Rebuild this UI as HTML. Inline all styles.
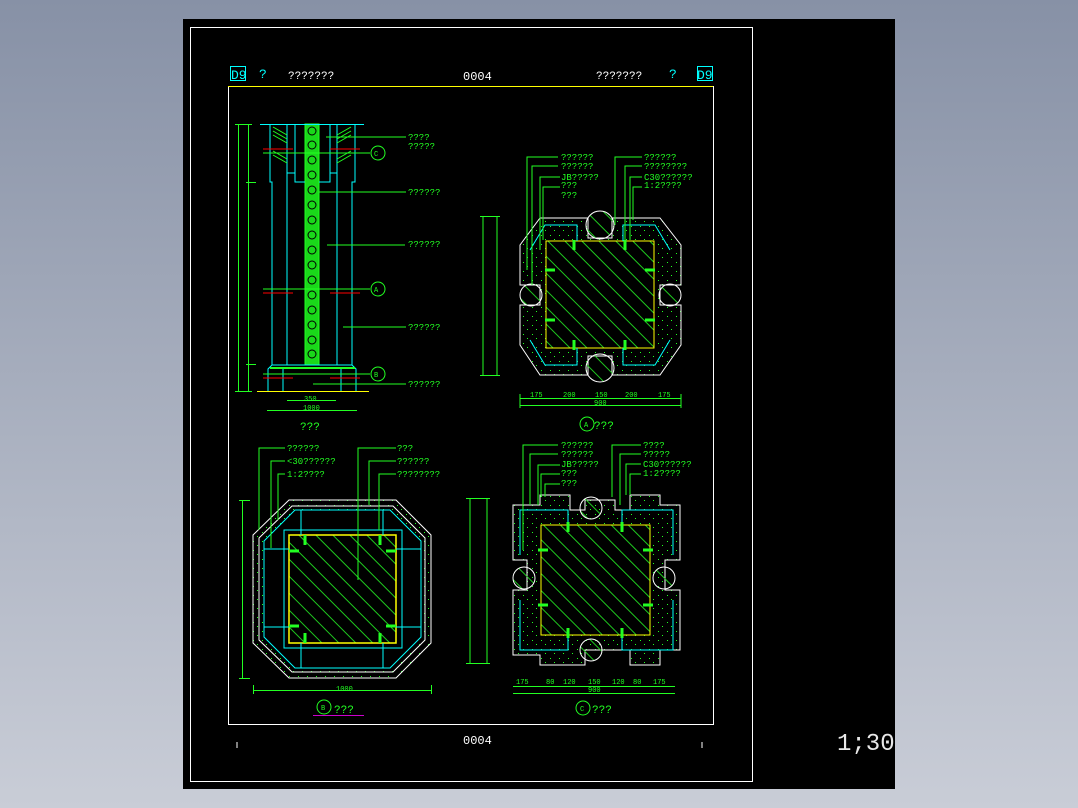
<!DOCTYPE html>
<html><head><meta charset="utf-8"><style>
html,body{margin:0;padding:0;width:1078px;height:808px;overflow:hidden;background:linear-gradient(#8791a6,#c9cdd7);}
svg{position:absolute;left:0;top:0}
text{font-family:"Liberation Mono",monospace;}
</style></head><body>
<svg width="1078" height="808" viewBox="0 0 1078 808">
<defs>
<pattern id="h" width="12" height="12" patternUnits="userSpaceOnUse" patternTransform="rotate(-45)">
<line x1="1" y1="0" x2="1" y2="12" stroke="#1fc91f" stroke-width="1"/>
</pattern>
<pattern id="dots" width="9" height="9" patternUnits="userSpaceOnUse">
<rect x="1" y="1" width="1" height="1" fill="#2f2"/><rect x="5" y="5" width="1" height="1" fill="#2f2"/>
</pattern>
</defs>
<rect x="183" y="19" width="712" height="770" fill="#000"/>
<rect x="190.5" y="27.5" width="562" height="754" fill="none" stroke="#fff"/>
<rect x="228.5" y="86.5" width="485" height="638" fill="none" stroke="#fff"/>
<line x1="228" y1="86.5" x2="713" y2="86.5" stroke="#ff0"/>
<g fill="#fff" font-size="11">
<text x="288" y="79">???????</text><text x="463" y="80" font-size="12">0004</text><text x="596" y="79">???????</text>
<text x="463" y="744" font-size="12">0004</text>
</g>
<g fill="#0ff" font-size="13"><text x="231" y="79">D9</text><text x="259" y="78">?</text><text x="669" y="78">?</text><text x="697" y="79">D9</text></g>
<rect x="230.5" y="66.5" width="15" height="14" fill="none" stroke="#0ff"/>
<rect x="697.5" y="66.5" width="15" height="14" fill="none" stroke="#0ff"/>
<line x1="237" y1="742" x2="237" y2="748" stroke="#fff"/><line x1="702" y1="742" x2="702" y2="748" stroke="#fff"/>
<text x="837" y="750" fill="#e8e8e8" font-size="24" font-family="Liberation Sans,sans-serif">1;30</text>

<!-- Elevation -->
<g fill="none" stroke-width="1">
<rect x="305" y="124" width="14" height="241" fill="#1ad81a" stroke="#2f2"/>
<g stroke="#000">
<circle cx="312" cy="131" r="4"/><circle cx="312" cy="145" r="4"/><circle cx="312" cy="160" r="4"/><circle cx="312" cy="175" r="4"/><circle cx="312" cy="190" r="4"/><circle cx="312" cy="205" r="4"/><circle cx="312" cy="220" r="4"/><circle cx="312" cy="235" r="4"/><circle cx="312" cy="250" r="4"/><circle cx="312" cy="265" r="4"/><circle cx="312" cy="280" r="4"/><circle cx="312" cy="295" r="4"/><circle cx="312" cy="310" r="4"/><circle cx="312" cy="325" r="4"/><circle cx="312" cy="340" r="4"/><circle cx="312" cy="354" r="4"/></g>
<g stroke="#0ff">
<line x1="260" y1="124.5" x2="364" y2="124.5"/>
<polyline points="270,124 270,182 272,182 272,365"/><polyline points="355,124 355,182 352,182 352,365"/>
<polyline points="287,124 287,173 295,173 295,124"/><polyline points="337,124 337,173 330,173 330,124"/>
<polyline points="295,124 295,182 305,182"/><polyline points="330,124 330,182 319,182"/>
<line x1="287" y1="173" x2="287" y2="365"/><line x1="337" y1="173" x2="337" y2="365"/>
<polyline points="272,365 268,369 268,391"/><polyline points="352,365 356,369 356,391"/>
<line x1="272" y1="365" x2="352" y2="365"/><line x1="283" y1="369" x2="283" y2="391"/><line x1="341" y1="369" x2="341" y2="391"/>
</g>
<g stroke="#2f2"><path d="M273,127 L287,135 M273,131 L287,139 M273,135 L287,143 M337,135 L351,127 M337,139 L351,131 M337,143 L351,135 M273,151 L287,159 M273,155 L287,163 M337,159 L351,151 M337,163 L351,155"/></g>
<line x1="270" y1="368" x2="355" y2="368" stroke="#2f2" stroke-width="2"/>
<line x1="257" y1="391.5" x2="369" y2="391.5" stroke="#ff0"/>
<g stroke="#f00"><line x1="263" y1="149" x2="293" y2="149"/><line x1="330" y1="149" x2="360" y2="149"/><line x1="263" y1="293" x2="293" y2="293"/><line x1="330" y1="293" x2="360" y2="293"/><line x1="263" y1="378" x2="293" y2="378"/><line x1="330" y1="378" x2="360" y2="378"/></g>
<g stroke="#2f2">
<line x1="263" y1="153" x2="370" y2="153"/><line x1="263" y1="289" x2="370" y2="289"/><line x1="263" y1="374" x2="370" y2="374"/>
<line x1="238.5" y1="124" x2="238.5" y2="391"/><line x1="248.5" y1="124" x2="248.5" y2="391"/>
<line x1="235" y1="124.5" x2="252" y2="124.5"/><line x1="235" y1="391.5" x2="252" y2="391.5"/><line x1="246" y1="182.5" x2="256" y2="182.5"/><line x1="246" y1="364.5" x2="256" y2="364.5"/>
<line x1="287" y1="400.5" x2="336" y2="400.5"/><line x1="267" y1="410.5" x2="357" y2="410.5"/>
<line x1="326" y1="137" x2="406" y2="137"/><line x1="319" y1="192" x2="406" y2="192"/><line x1="327" y1="245" x2="405" y2="245"/><line x1="343" y1="327" x2="406" y2="327"/><line x1="313" y1="384" x2="406" y2="384"/>
<circle cx="378" cy="153" r="7"/><circle cx="378" cy="289" r="7"/><circle cx="378" cy="374" r="7"/>
</g>
</g>
<g fill="#2f2" font-size="9">
<text x="408" y="140">????</text><text x="408" y="149">?????</text><text x="408" y="195">??????</text><text x="408" y="247">??????</text><text x="408" y="330">??????</text><text x="408" y="387">??????</text>
<text x="300" y="430" font-size="11">???</text><text x="374" y="156" font-size="7">C</text><text x="374" y="292" font-size="7">A</text><text x="374" y="377" font-size="7">B</text>
<text x="304" y="401" font-size="7">350</text><text x="303" y="410" font-size="7">1000</text>
</g>

<!-- Plan A -->
<g fill="none">
<path d="M520,245 L540,218 L588,218 L588,238 L612,238 L612,218 L660,218 L681,245 L681,285 L660,285 L660,305 L681,305 L681,345 L660,375 L612,375 L612,356 L588,356 L588,375 L540,375 L520,345 L520,305 L540,305 L540,285 L520,285 Z" stroke="#fff" fill="url(#dots)"/>
<circle cx="600" cy="225" r="14" fill="url(#h)" stroke="#fff"/><circle cx="600" cy="368" r="14" fill="url(#h)" stroke="#fff"/>
<circle cx="531" cy="295" r="11" fill="url(#h)" stroke="#fff"/><circle cx="670" cy="295" r="11" fill="url(#h)" stroke="#fff"/>
<rect x="546" y="241" width="108" height="107" fill="#000" stroke="#ff0"/>
<rect x="546" y="241" width="108" height="107" fill="url(#h)" stroke="#ff0"/>
<g stroke="#0ff"><path d="M530,250 L545,225 L577,225 L577,241"/><path d="M670,250 L655,225 L623,225 L623,241"/><path d="M530,340 L545,365 L577,365 L577,348"/><path d="M670,340 L655,365 L623,365 L623,348"/></g>
<g stroke="#2f2" stroke-width="3"><line x1="574" y1="240" x2="574" y2="250"/><line x1="625" y1="240" x2="625" y2="250"/><line x1="574" y1="340" x2="574" y2="350"/><line x1="625" y1="340" x2="625" y2="350"/><line x1="545" y1="270" x2="555" y2="270"/><line x1="645" y1="270" x2="655" y2="270"/><line x1="545" y1="320" x2="555" y2="320"/><line x1="645" y1="320" x2="655" y2="320"/></g>
<g stroke="#2f2"><polyline points="527,270 527,157 558,157"/><polyline points="532,285 532,166 558,166"/><polyline points="540,250 540,177 560,177"/><polyline points="543,240 543,187 560,187"/>
<polyline points="615,225 615,157 642,157"/><polyline points="625,240 625,166 642,166"/><polyline points="630,240 630,177 642,177"/><polyline points="633,220 633,187 642,187"/>
<line x1="483" y1="216" x2="483" y2="375"/><line x1="497" y1="216" x2="497" y2="375"/><line x1="480" y1="216.5" x2="500" y2="216.5"/><line x1="480" y1="375.5" x2="500" y2="375.5"/>
<line x1="520" y1="398.5" x2="681" y2="398.5"/><line x1="520" y1="405.5" x2="681" y2="405.5"/><line x1="520" y1="394" x2="520" y2="408"/><line x1="681" y1="394" x2="681" y2="408"/>
<circle cx="587" cy="424" r="7"/></g>
</g>
<g fill="#2f2" font-size="9">
<text x="561" y="160">??????</text><text x="561" y="169">??????</text><text x="561" y="180">JB?????</text><text x="561" y="188">???</text><text x="561" y="198">???</text>
<text x="644" y="160">??????</text><text x="644" y="169">????????</text><text x="644" y="180">C30??????</text><text x="644" y="188">1:2????</text>
<text x="594" y="429" font-size="11">???</text><text x="584" y="427" font-size="7">A</text>
<g font-size="7"><text x="530" y="397">175</text><text x="563" y="397">200</text><text x="595" y="397">150</text><text x="625" y="397">200</text><text x="658" y="397">175</text><text x="594" y="405">900</text></g>
</g>

<!-- Plan B -->
<g fill="none">
<path d="M253,535 L289,500 L396,500 L431,535 L431,643 L396,678 L289,678 L253,643 Z" stroke="#fff" fill="url(#dots)"/>
<path d="M259,538 L292,506 L393,506 L425,538 L425,640 L393,672 L292,672 L259,640 Z" stroke="#fff"/>
<path d="M264,541 L295,510 L390,510 L421,541 L421,637 L390,668 L295,668 L264,637 Z" stroke="#0ff" fill="#000"/>
<rect x="284" y="530" width="118" height="118" stroke="#0ff"/>
<rect x="289" y="535" width="107" height="108" fill="url(#h)" stroke="#ff0" stroke-width="1.5"/>
<g stroke="#0ff"><line x1="301" y1="510" x2="301" y2="535"/><line x1="383" y1="510" x2="383" y2="535"/><line x1="301" y1="643" x2="301" y2="668"/><line x1="383" y1="643" x2="383" y2="668"/><line x1="264" y1="549" x2="289" y2="549"/><line x1="264" y1="627" x2="289" y2="627"/><line x1="396" y1="549" x2="421" y2="549"/><line x1="396" y1="627" x2="421" y2="627"/></g>
<g stroke="#2f2" stroke-width="3"><line x1="305" y1="535" x2="305" y2="545"/><line x1="380" y1="535" x2="380" y2="545"/><line x1="305" y1="633" x2="305" y2="643"/><line x1="380" y1="633" x2="380" y2="643"/><line x1="289" y1="551" x2="299" y2="551"/><line x1="386" y1="551" x2="396" y2="551"/><line x1="289" y1="626" x2="299" y2="626"/><line x1="386" y1="626" x2="396" y2="626"/></g>
<g stroke="#2f2"><polyline points="259,530 259,448 285,448"/><polyline points="271,548 271,461 285,461"/><polyline points="278,520 278,474 285,474"/>
<polyline points="358,580 358,448 396,448"/><polyline points="369,505 369,461 396,461"/><polyline points="379,530 379,474 396,474"/>
<line x1="242.5" y1="500" x2="242.5" y2="678"/><line x1="239" y1="500.5" x2="250" y2="500.5"/><line x1="239" y1="678.5" x2="250" y2="678.5"/>
<line x1="253" y1="690.5" x2="431" y2="690.5"/><line x1="253.5" y1="685" x2="253.5" y2="694"/><line x1="431.5" y1="685" x2="431.5" y2="694"/>
<circle cx="324" cy="707" r="7"/></g>
<line x1="313" y1="715.5" x2="364" y2="715.5" stroke="#c0c"/>
</g>
<g fill="#2f2" font-size="9">
<text x="287" y="451">??????</text><text x="287" y="464">&lt;30??????</text><text x="287" y="477">1:2????</text>
<text x="397" y="451">???</text><text x="397" y="464">??????</text><text x="397" y="477">????????</text>
<text x="334" y="713" font-size="11">???</text><text x="321" y="710" font-size="7">B</text><text x="336" y="691" font-size="7">1000</text>
</g>

<!-- Plan C -->
<g fill="none">
<path d="M513,505 L540,505 L540,495 L570,495 L570,510 L585,510 L585,500 L615,500 L615,510 L630,510 L630,495 L660,495 L660,505 L680,505 L680,560 L665,560 L665,590 L680,590 L680,650 L660,650 L660,665 L630,665 L630,650 L585,650 L585,665 L540,665 L540,655 L513,655 L513,590 L527,590 L527,560 L513,560 Z" stroke="#fff" fill="url(#dots)"/>
<circle cx="591" cy="508" r="11" fill="url(#h)" stroke="#fff"/><circle cx="591" cy="650" r="11" fill="url(#h)" stroke="#fff"/>
<circle cx="524" cy="578" r="11" fill="url(#h)" stroke="#fff"/><circle cx="664" cy="578" r="11" fill="url(#h)" stroke="#fff"/>
<g stroke="#0ff"><path d="M520,555 L520,510 L568,510 L568,525"/><path d="M673,555 L673,510 L622,510 L622,525"/><path d="M520,600 L520,650 L568,650 L568,636"/><path d="M673,600 L673,650 L622,650 L622,636"/></g>
<rect x="541" y="525" width="109" height="110" fill="#000" stroke="#ff0"/>
<rect x="541" y="525" width="109" height="110" fill="url(#h)" stroke="#ff0"/>
<g stroke="#2f2" stroke-width="3"><line x1="568" y1="522" x2="568" y2="532"/><line x1="622" y1="522" x2="622" y2="532"/><line x1="568" y1="628" x2="568" y2="638"/><line x1="622" y1="628" x2="622" y2="638"/><line x1="538" y1="550" x2="548" y2="550"/><line x1="643" y1="550" x2="653" y2="550"/><line x1="538" y1="605" x2="548" y2="605"/><line x1="643" y1="605" x2="653" y2="605"/></g>
<g stroke="#2f2"><polyline points="523,550 523,445 558,445"/><polyline points="530,505 530,454 558,454"/><polyline points="538,505 538,465 560,465"/><polyline points="541,497 541,474 560,474"/><polyline points="545,497 545,484 560,484"/>
<polyline points="612,497 612,445 641,445"/><polyline points="620,505 620,454 641,454"/><polyline points="626,495 626,464 641,464"/><polyline points="630,495 630,474 641,474"/>
<line x1="470" y1="498" x2="470" y2="663"/><line x1="487" y1="498" x2="487" y2="663"/><line x1="466" y1="498.5" x2="490" y2="498.5"/><line x1="466" y1="663.5" x2="490" y2="663.5"/>
<line x1="513" y1="686.5" x2="675" y2="686.5"/><line x1="513" y1="693.5" x2="675" y2="693.5"/>
<circle cx="583" cy="708" r="7"/></g>
</g>
<g fill="#2f2" font-size="9">
<text x="561" y="448">??????</text><text x="561" y="457">??????</text><text x="561" y="467">JB?????</text><text x="561" y="476">???</text><text x="561" y="486">???</text>
<text x="643" y="448">????</text><text x="643" y="457">?????</text><text x="643" y="467">C30??????</text><text x="643" y="476">1:2????</text>
<text x="592" y="713" font-size="11">???</text><text x="580" y="711" font-size="7">C</text>
<g font-size="7"><text x="516" y="684">175</text><text x="546" y="684">80</text><text x="563" y="684">120</text><text x="588" y="684">150</text><text x="612" y="684">120</text><text x="633" y="684">80</text><text x="653" y="684">175</text><text x="588" y="692">900</text></g>
</g>
</svg>
</body></html>
